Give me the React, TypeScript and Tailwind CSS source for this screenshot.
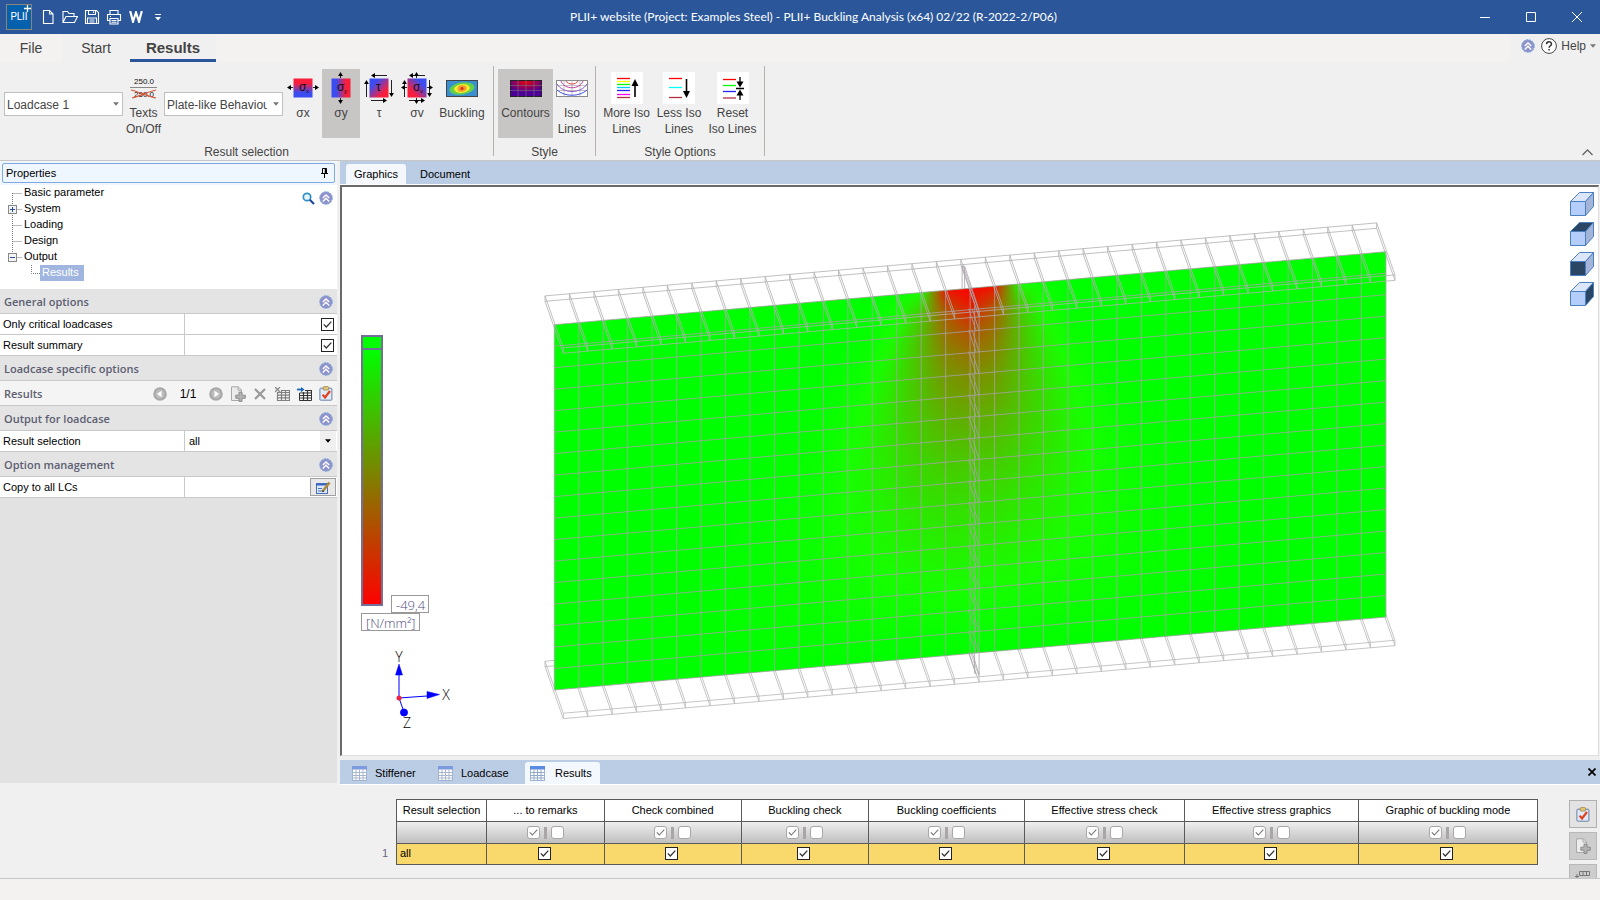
import React, { useState } from "react";
import clsx from "clsx";

const UI_FONT = "font-['Liberation_Sans',sans-serif]";
const HEAD_FONT = "font-['Open_Sans',sans-serif]";

/* ---------- small shared icons ---------- */

const CircleChevrons = () => (
  <svg width="14" height="14" viewBox="0 0 14 14">
    <circle cx="7" cy="7" r="6.3" fill="#8f93cc" stroke="#79a6dd" strokeWidth="1" strokeDasharray="2 1" />
    <path d="M3.8 7 7 3.9 10.2 7M3.8 10.4 7 7.3l3.2 3.1" fill="none" stroke="#fff" strokeWidth="1.4" />
  </svg>
);

const DownArrow = ({ color = "#777", className = "" }: { color?: string; className?: string }) => (
  <svg width="6" height="4" viewBox="0 0 6 4" className={className}>
    <path d="M0 .3h6L3 3.8z" fill={color} />
  </svg>
);

const DocPlusIcon = () => (
  <svg width="16" height="16" viewBox="0 0 16 16">
    <path d="M1.5.8h6.8l3 3v10.7H1.5z" fill="#ececec" stroke="#a9a9a9" />
    <path d="M8 .8v3.4h3.3" fill="none" stroke="#a9a9a9" />
    <path d="M9 6.2h3v3h3.3v3H12v3.2H9v-3.2H5.8v-3H9z" fill="#b4b4b4" stroke="#858585" strokeWidth=".9" />
  </svg>
);

const ClipboardIcon = () => (
  <svg width="14" height="15" viewBox="0 0 14 15">
    <rect x=".9" y="2.2" width="12" height="12" rx=".8" fill="#dfe9f8" stroke="#6b80a8" />
    <rect x="4.2" y=".6" width="5.4" height="3.4" rx="1" fill="#e3c878" stroke="#9a8248" strokeWidth=".8" />
    <path d="M3.6 8.6 6 11.4 11 5" fill="none" stroke="#e0401c" strokeWidth="2.2" />
  </svg>
);

const GridIcon = ({ faded = false }: { faded?: boolean }) => (
  <svg width="15" height="15" viewBox="0 0 15 15">
    <rect x=".5" y=".5" width="14" height="14" fill="#fff" stroke="#9fb3d4" />
    <rect width="15" height="3.5" fill={faded ? "#7d9ade" : "#5b8be0"} />
    <path
      d="M.5 6.5h14M.5 9.5h14M.5 12h14M4 3.5v11M7.5 3.5v11M11 3.5v11"
      stroke={faded ? "#a9b7cc" : "#90a9cd"}
      strokeWidth="1"
    />
  </svg>
);

interface CheckProps {
  label: string;
  soft?: boolean;
  checked?: boolean;
}

const Check: React.FC<CheckProps> = ({ label, soft = false, checked = true }) => {
  const [on, setOn] = useState(checked);

  return (
    <span className="relative block h-[13px] w-[13px]">
      <input
        type="checkbox"
        aria-label={label}
        checked={on}
        onChange={() => setOn(!on)}
        className={clsx(
          "block h-[13px] w-[13px] appearance-none bg-white",
          soft ? "rounded-[3px] border border-[#aaa6a8]" : "border border-[#222]"
        )}
      />
      {on && (
        <svg viewBox="0 0 13 13" className="pointer-events-none absolute inset-0 h-[13px] w-[13px]">
          <path
            d="M2.8 6.4 5.3 9 10.3 3.6"
            fill="none"
            stroke={soft ? "#777" : "#333"}
            strokeWidth={soft ? 1.1 : 1.3}
          />
        </svg>
      )}
    </span>
  );
};

/* ---------- title bar ---------- */

const quickActions = [
  {
    name: "New",
    icon: <path d="M3.5 1.5h6l3.5 3.5v9.5h-9.5zM9.5 1.5v3.5h3.5" />,
  },
  {
    name: "Open",
    icon: <path d="M1 13.5v-11h4.5l1.5 2h5v3M1 13.5 4 7.5h11.5l-3 6z" />,
  },
  {
    name: "Save",
    icon: <path d="M1.5 1.5h11l2 2v11h-13zM4.5 1.5v4h7v-4M9.5 2.5v1.5M3.5 14.5v-5.5h9v5.5M5.5 11h5M5.5 13h5" />,
  },
  {
    name: "Print",
    icon: <path d="M4 5.5v-4h8v4M3.5 11.5h-2v-6h13v6h-2M4 9.5h8v5.5h-8zM5.5 11.5h5M5.5 13.3h5M4 7.5h1" />,
  },
];

const TitleBar = () => (
  <header className="flex h-[34px] shrink-0 items-center bg-[#2b579a] text-white">
    <div className="relative ml-1.5 mr-[5px] flex h-[26px] w-[26px] items-center justify-center border border-[#8a8577] bg-[#0560ad] font-['Roboto',sans-serif] text-[10px] leading-none">
      PLII
      <svg viewBox="0 0 7 7" className="absolute right-0 top-0 h-[7px] w-[7px]">
        <path d="M3.5 0v7M0 3.5h7" stroke="#fff" strokeWidth="1.3" />
      </svg>
    </div>
    {quickActions.map((a) => (
      <button key={a.name} aria-label={a.name} className="flex w-[22px] justify-center">
        <svg width="16" height="16" viewBox="0 0 16 16" fill="none" stroke="#fff" strokeWidth="1.1">
          {a.icon}
        </svg>
      </button>
    ))}
    <button aria-label="Word export" className="flex w-[22px] justify-center">
      <svg width="14" height="12" viewBox="0 0 14 12" fill="none" stroke="#fff" strokeWidth="2.2">
        <path d="M1.2 0 4 10.5 7 1.5 10 10.5 12.8 0" />
      </svg>
    </button>
    <button aria-label="Customize" className="flex w-[22px] justify-center">
      <svg width="6" height="7" viewBox="0 0 6 7">
        <path d="M0 .5h6" stroke="#fff" />
        <path d="M0 3h6L3 6.5z" fill="#fff" />
      </svg>
    </button>
    <h1 className="flex-1 truncate pr-1 text-center font-['Lato',sans-serif] text-[12px] leading-4">
      PLII+ website (Project: Examples Steel) - PLII+ Buckling Analysis (x64) 02/22 (R-2022-2/P06)
    </h1>
    {[
      ["Minimize", "M0 5.5h10"],
      ["Maximize", "M.5.5h9v9h-9z"],
      ["Close", "M0 0l10 10M10 0 0 10"],
    ].map(([name, d]) => (
      <button key={name} aria-label={name} className="flex w-[46px] justify-center">
        <svg width="10" height="10" viewBox="0 0 10 10">
          <path d={d} fill="none" stroke="#fff" />
        </svg>
      </button>
    ))}
  </header>
);

/* ---------- ribbon ---------- */

const Arrow = ({ x1, y1, x2, y2 }: { x1: number; y1: number; x2: number; y2: number }) => {
  const len = Math.hypot(x2 - x1, y2 - y1);
  const ux = (x2 - x1) / len;
  const uy = (y2 - y1) / len;
  const bx = x2 - ux * 4;
  const by = y2 - uy * 4;
  return (
    <g>
      <path d={`M${x1} ${y1}L${bx} ${by}`} stroke="#222" />
      <path d={`M${x2} ${y2}L${bx - uy * 2.4} ${by + ux * 2.4}L${bx + uy * 2.4} ${by - ux * 2.4}z`} fill="#000" />
    </g>
  );
};

interface StressIconProps {
  id: string;
  dir: [number, number, number, number];
  colors: [string, string];
  sign: string;
  sub?: string;
  children: React.ReactNode;
}

const StressIcon: React.FC<StressIconProps> = ({ id, dir, colors, sign, sub, children }) => (
  <svg width="32" height="32" viewBox="0 0 32 32">
    <defs>
      <linearGradient id={id} x1={dir[0]} y1={dir[1]} x2={dir[2]} y2={dir[3]}>
        <stop offset=".25" stopColor={colors[0]} />
        <stop offset=".75" stopColor={colors[1]} />
      </linearGradient>
    </defs>
    {children}
    <rect x="6.5" y="6.5" width="19" height="19" fill={`url(#${id})`} />
    <text x={sub ? 12 : 13} y="19" fontSize="12" fontFamily="Liberation Sans" fill="#111">
      {sign}
    </text>
    {sub && (
      <text x="19" y="21" fontSize="6" fontFamily="Liberation Sans" fill="#111">
        {sub}
      </text>
    )}
  </svg>
);

const BLUE = "#3b4cf0";
const RED = "#f81e3c";

const SigmaX = () => (
  <StressIcon id="gsx" dir={[0, 0, 0, 1]} colors={[RED, BLUE]} sign="σ" sub="x">
    <Arrow x1={6} y1={15.5} x2={0} y2={15.5} />
    <Arrow x1={26} y1={15.5} x2={32} y2={15.5} />
  </StressIcon>
);

const SigmaY = () => (
  <StressIcon id="gsy" dir={[0, 0, 1, 0]} colors={[BLUE, RED]} sign="σ" sub="y">
    <Arrow x1={15.5} y1={6} x2={15.5} y2={0} />
    <Arrow x1={15.5} y1={26} x2={15.5} y2={32} />
  </StressIcon>
);

// shear arrows run round the square
const ShearArrows = () => (
  <>
    <Arrow x1={24} y1={3.5} x2={8} y2={3.5} />
    <Arrow x1={8} y1={28.5} x2={24} y2={28.5} />
    <Arrow x1={3.5} y1={25} x2={3.5} y2={8} />
    <Arrow x1={28.5} y1={8} x2={28.5} y2={25} />
  </>
);

const Tau = () => (
  <StressIcon id="gtau" dir={[0, 0, 1, 1]} colors={[BLUE, RED]} sign="τ">
    <ShearArrows />
  </StressIcon>
);

const SigmaV = () => (
  <StressIcon id="gsv" dir={[1, 0, 0, 1]} colors={[BLUE, RED]} sign="σ" sub="v">
    <ShearArrows />
    <Arrow x1={15.5} y1={6} x2={15.5} y2={0} />
    <Arrow x1={15.5} y1={26} x2={15.5} y2={32} />
    <Arrow x1={6} y1={15.5} x2={0} y2={15.5} />
    <Arrow x1={26} y1={15.5} x2={32} y2={15.5} />
  </StressIcon>
);

const BucklingIcon = () => (
  <svg width="32" height="17" viewBox="0 0 32 17">
    <rect x=".5" y=".5" width="31" height="16" fill="#3a8fd0" stroke="#444" />
    <g transform="rotate(-8 16 8.5)">
      <ellipse cx="16" cy="8.5" rx="12.5" ry="6" fill="#63cf4a" />
      <ellipse cx="16" cy="8.5" rx="8" ry="4.3" fill="#f6ea2c" />
      <ellipse cx="16" cy="8.5" rx="4.5" ry="3.2" fill="#f29a2e" />
      <circle cx="16" cy="8.5" r="1.6" fill="#d8301c" />
    </g>
  </svg>
);

const ContoursIcon = () => (
  <svg width="32" height="17" viewBox="0 0 32 17">
    <defs>
      <radialGradient id="gcon" cx=".5" cy=".1" r=".65">
        <stop offset="0" stopColor="#e60010" />
        <stop offset="1" stopColor="#4c0098" />
      </radialGradient>
    </defs>
    <rect x=".5" y=".5" width="31" height="16" fill="url(#gcon)" stroke="#222" />
    <path d="M0 5.5h32M0 10.5h32M8 0v17M16 0v17M24 0v17" stroke="#777" strokeOpacity=".7" strokeWidth=".8" />
  </svg>
);

const IsoIcon = () => (
  <svg width="32" height="17" viewBox="0 0 32 17" fill="none">
    <rect x=".5" y=".5" width="31" height="16" fill="#fff" stroke="#888" />
    <path d="M0 5.5h32M0 10.5h32M8 0v17M16 0v17M24 0v17" stroke="#aaa" strokeWidth=".7" />
    <path d="M10 1c2 4 10 4 12 0" stroke="#e04040" />
    <path d="M5 1c3 9 19 9 22 0" stroke="#c040a0" />
    <path d="M1 4c6 10 24 10 30 0" stroke="#8850c8" />
    <path d="M1 10c8 7 22 7 30 0" stroke="#4050e0" />
  </svg>
);

interface IsoBarsProps {
  bars: [number, string][];
  children: React.ReactNode;
}

const IsoBars: React.FC<IsoBarsProps> = ({ bars, children }) => (
  <svg width="32" height="32" viewBox="0 0 32 32">
    <rect width="32" height="32" fill="#fff" />
    {bars.map(([y, color]) => (
      <path key={y} d={`M6 ${y}h13`} stroke={color} strokeWidth="1.3" />
    ))}
    {children}
  </svg>
);

const MoreIsoIcon = () => (
  <IsoBars
    bars={[
      [6.5, "#f00"],
      [9.5, "#ff0"],
      [12.5, "#0f0"],
      [15.5, "#0cf"],
      [18.5, "#22f"],
      [22.5, "#f0f"],
      [25.5, "#b03040"],
    ]}>
    <path d="M24 25v-14" stroke="#000" strokeWidth="1.6" />
    <path d="M24 7l3.5 7h-7z" fill="#000" />
  </IsoBars>
);

const LessIsoIcon = () => (
  <IsoBars
    bars={[
      [6.5, "#f00"],
      [15.5, "#0ff"],
      [25.5, "#b03040"],
    ]}>
    <path d="M23.5 7v14" stroke="#000" strokeWidth="1.6" />
    <path d="M23.5 26l3.5-7h-7z" fill="#000" />
  </IsoBars>
);

const ResetIsoIcon = () => (
  <IsoBars
    bars={[
      [7.5, "#f00"],
      [13.5, "#0f0"],
      [19.5, "#22f"],
      [26, "#b03040"],
    ]}>
    <path d="M23 5v8M23 20v8M19 16.5h8" stroke="#000" strokeWidth="1.3" />
    <path d="M23 15.5l3.5-6h-7zM23 17.5l3.5 6h-7z" fill="#000" />
  </IsoBars>
);

const TextsIcon = () => (
  <svg width="28" height="24" viewBox="0 0 28 24" fontFamily="Liberation Sans" fontSize="8">
    <text x="4" y="8" fill="#111">
      250.0
    </text>
    <path d="M0 11.5h27" stroke="#888" />
    <text x="4" y="21" fill="#111">
      250.0
    </text>
    <path d="M1 14c8 2 16 6 25 8M26 14c-9 2-16 6-24 8" fill="none" stroke="#d8583a" strokeWidth="1.2" />
  </svg>
);

interface RibbonButtonProps {
  icon: React.ReactNode;
  lines: string[];
  width: string;
  active?: boolean;
  onClick?: () => void;
}

const RibbonButton: React.FC<RibbonButtonProps> = ({ icon, lines, width, active, onClick }) => (
  <button
    onClick={onClick}
    className={clsx("flex h-[69px] shrink-0 flex-col items-center whitespace-nowrap", width, active && "bg-[#c8c6c4]")}>
    <span className="flex h-9 items-center justify-center pt-0.5">{icon}</span>
    {lines.map((l) => (
      <span key={l} className="leading-4">
        {l}
      </span>
    ))}
  </button>
);

const RibbonSelect = ({ label, value }: { label: string; value: string }) => (
  <div className="relative mt-[23px] h-6 w-[119px] shrink-0">
    <select
      aria-label={label}
      className="h-full w-full appearance-none overflow-hidden border border-[#c0c0c0] bg-white pl-0.5 pr-[15px] pt-0.5 text-[12px] text-[#444]">
      <option>{value}</option>
    </select>
    <DownArrow className="pointer-events-none absolute right-[4px] top-[10px]" />
  </div>
);

const RibbonGroup = ({ title, children }: { title: string; children: React.ReactNode }) => (
  <section className="mt-1 flex h-[90px] shrink-0 flex-col border-r border-[#b4b2b0] pt-[3px]">
    <div className="flex px-1">{children}</div>
    <h2 className="mt-1.5 text-center leading-4">{title}</h2>
  </section>
);

const Ribbon = () => {
  const [result, setResult] = useState("σy");
  const [style, setStyle] = useState("Contours");

  const stresses: [string, React.ReactNode, string][] = [
    ["σx", <SigmaX />, "w-[38px]"],
    ["σy", <SigmaY />, "w-[38px]"],
    ["τ", <Tau />, "w-[38px]"],
    ["σv", <SigmaV />, "w-[38px]"],
    ["Buckling", <BucklingIcon />, "w-[52px]"],
  ];

  return (
    <div className="shrink-0 border-b border-[#c8c6c4] bg-[#f0f0f0] text-[12px] text-[#444]">
      <nav className="flex h-7 bg-[#f3f2f1] text-[14px]">
        <button className="w-[62px]">File</button>
        <button className="w-[68px] bg-[#f0f0f0]">Start</button>
        <button className="w-[86px] border-b-[3px] border-[#2b579a] bg-[#f0f0f0] pt-[3px] text-[15px] font-bold leading-5">
          Results
        </button>
        <div className="ml-auto flex items-center bg-[#f0f0f0] pb-1 pr-1 pl-3 text-[12px]">
          <button aria-label="Collapse all" className="mr-1.5">
            <CircleChevrons />
          </button>
          <button className="flex items-center gap-1">
            <svg width="16" height="16" viewBox="0 0 16 16">
              <circle cx="8" cy="8" r="7.4" fill="#fff" stroke="#444" />
              <path
                d="M5.6 6.2c0-3.2 4.9-3 4.9-.2 0 1.700-2.400 1.800-2.400 3.800M8.1 11v1.6"
                fill="none"
                stroke="#333"
                strokeWidth="1.5"
              />
            </svg>
            Help
            <DownArrow />
          </button>
        </div>
      </nav>
      <div className="flex h-[98px]">
        <RibbonGroup title="Result selection">
          <RibbonSelect label="Loadcase" value="Loadcase 1" />
          <RibbonButton icon={<TextsIcon />} lines={["Texts", "On/Off"]} width="w-[41px]" />
          <RibbonSelect label="Behaviour" value="Plate-like Behaviour" />
          <div className="flex px-px">
            {stresses.map(([name, icon, width]) => (
              <RibbonButton
                key={name}
                icon={icon}
                lines={[name]}
                width={width}
                active={result === name}
                onClick={() => setResult(name)}
              />
            ))}
          </div>
        </RibbonGroup>
        <RibbonGroup title="Style">
          <RibbonButton
            icon={<ContoursIcon />}
            lines={["Contours"]}
            width="w-[55px]"
            active={style === "Contours"}
            onClick={() => setStyle("Contours")}
          />
          <RibbonButton
            icon={<IsoIcon />}
            lines={["Iso", "Lines"]}
            width="w-[38px]"
            active={style === "Iso"}
            onClick={() => setStyle("Iso")}
          />
        </RibbonGroup>
        <RibbonGroup title="Style Options">
          <RibbonButton icon={<MoreIsoIcon />} lines={["More Iso", "Lines"]} width="w-[53px]" />
          <RibbonButton icon={<LessIsoIcon />} lines={["Less Iso", "Lines"]} width="w-[52px]" />
          <RibbonButton icon={<ResetIsoIcon />} lines={["Reset", "Iso Lines"]} width="w-[55px]" />
        </RibbonGroup>
        <button aria-label="Collapse ribbon" className="ml-auto mr-[7px] self-end pb-1">
          <svg width="11" height="7" viewBox="0 0 11 7">
            <path d="M.5 6 5.5 1l5 5" fill="none" stroke="#666" strokeWidth="1.3" />
          </svg>
        </button>
      </div>
    </div>
  );
};

/* ---------- properties panel ---------- */

interface TreeItem {
  name: string;
  box?: "+" | "-";
  child?: boolean;
}

const treeItems: TreeItem[] = [
  { name: "Basic parameter" },
  { name: "System", box: "+" },
  { name: "Loading" },
  { name: "Design" },
  { name: "Output", box: "-" },
  { name: "Results", child: true },
];

const TreeGutter = ({ item, first }: { item: TreeItem; first: boolean }) => {
  if (item.child) {
    return (
      <svg width="40" height="16" viewBox="0 0 40 16">
        <path d="M31.5 0v8.5H40" fill="none" stroke="#777" strokeDasharray="1 1" />
      </svg>
    );
  }
  return (
    <svg width="22" height="16" viewBox="0 0 22 16">
      <path
        d={`M12.5 ${first ? 8 : 0}V${item.box === "-" ? 8 : 16}M12.5 8.5H22`}
        stroke="#777"
        strokeDasharray="1 1"
      />
      {item.box && (
        <>
          <rect x="8.5" y="4.5" width="8" height="8" fill="#f4f4f4" stroke="#888" />
          <path d={item.box === "+" ? "M10 8.5h5M12.5 6v5" : "M10 8.5h5"} stroke="#2a4a9c" />
        </>
      )}
    </svg>
  );
};

const SectionHead = ({ title, children }: { title: string; children?: React.ReactNode }) => (
  <div
    className={clsx("flex h-[25px] items-center border-b border-[#c9c9c9]", children ? "bg-[#f4f4f4]" : "bg-[#e4e4e4]")}>
    <h3 className={clsx("flex-1 pl-1 pt-0.5 text-[11px] font-semibold text-[#5c5e72]", HEAD_FONT)}>{title}</h3>
    {children ?? (
      <button aria-label={`Collapse ${title}`} className="w-[18px] pt-px">
        <CircleChevrons />
      </button>
    )}
  </div>
);

const PropertyRow = ({ label, children }: { label: string; children?: React.ReactNode }) => (
  <div className="flex h-[21px] border-b border-[#c9c9c9] bg-white">
    <div className="flex w-[185px] items-center border-r border-[#c9c9c9] pl-[3px]">{label}</div>
    <div className="flex flex-1 items-center justify-end">{children}</div>
  </div>
);

const StepIcon = ({ d }: { d: string }) => (
  <svg width="14" height="14" viewBox="0 0 14 14">
    <circle cx="7" cy="7" r="6.8" fill="#a9a9a9" />
    <circle cx="7" cy="7" r="4.5" fill="#bdbdbd" />
    <path d={d} fill="#fff" />
  </svg>
);

const resultTools: [string, React.ReactNode][] = [
  ["Next", <StepIcon d="M5.5 3.8 10 7l-4.5 3.2z" />],
  ["Add", <DocPlusIcon />],
  [
    "Delete",
    <svg width="12" height="12" viewBox="0 0 12 12">
      <path d="M1 1l10 10M11 1 1 11" stroke="#999" strokeWidth="2.2" />
    </svg>,
  ],
  [
    "Clear table",
    <svg width="15" height="14" viewBox="0 0 15 14">
      <path
        d="M2.5 5.5h12v8h-12zM2.5 8.2h12M2.5 10.8h12M6.5 3v10.5M10.5 3v10.5M7 3.5h7.5v2"
        fill="none"
        stroke="#808080"
        strokeWidth="1.2"
      />
      <path d="M0 0l5 5M5 0 0 5" stroke="#8a8a8a" strokeWidth="1.3" />
    </svg>,
  ],
  [
    "Insert table",
    <svg width="15" height="14" viewBox="0 0 15 14">
      <path d="M2.5 6h12v7.5h-12z" fill="#fff" stroke="#333" />
      <path d="M2.5 8.5h12M2.5 11h12M6.5 5v8.5M10.5 3v10.5M8 3.5h6.5v2.5" fill="none" stroke="#333" strokeWidth="1.2" />
      <path d="M0 2.5h5" stroke="#1768b8" strokeWidth="1.8" />
      <path d="M4 0l3.5 2.5L4 5.2z" fill="#1768b8" />
    </svg>,
  ],
  ["Check", <ClipboardIcon />],
];

const PropertiesPanel = () => (
  <aside className="flex w-[337px] shrink-0 flex-col text-[11px] text-black">
    <div className="flex-1 bg-[#e2e2e2]">
      <div className="bg-[#f0f6fe] p-0.5">
        <div className="flex h-5 items-center justify-between rounded-[2px] border border-[#7fa9df] bg-[#eef6ff] pl-[3px] pr-[5px]">
          <h2>Properties</h2>
          <button aria-label="Pin panel">
            <svg width="9" height="10" viewBox="0 0 9 10">
              <path d="M2.5 5.5v-5h4v5M1 5.5h7M4.5 5.5V10" fill="none" stroke="#000" />
              <path d="M5.5 0v5.5" stroke="#000" strokeWidth="1.5" />
            </svg>
          </button>
        </div>
      </div>
      <div className="flex h-[104px] items-start bg-white">
        <ul className="flex-1">
          {treeItems.map((item, i) => (
            <li key={item.name} className="flex h-4 items-center">
              <TreeGutter item={item} first={i === 0} />
              {item.child ? (
                <a href="#results" className="h-4 bg-[#a0b6e0] pl-0.5 pr-[5px] leading-[14px] text-white">
                  {item.name}
                </a>
              ) : (
                <a href="#node" className="pb-0.5 pl-0.5 leading-[14px]">
                  {item.name}
                </a>
              )}
            </li>
          ))}
        </ul>
        <div className="flex items-center gap-1 pr-1 pt-1.5">
          <button aria-label="Search">
            <svg width="13" height="13" viewBox="0 0 13 13">
              <circle cx="5" cy="5" r="3.7" fill="#e4f4fb" stroke="#2f8fc4" strokeWidth="1.7" />
              <path d="M7.8 7.8 12 12" stroke="#24489a" strokeWidth="2.2" />
            </svg>
          </button>
          <button aria-label="Collapse tree">
            <CircleChevrons />
          </button>
        </div>
      </div>

      <SectionHead title="General options" />
      <PropertyRow label="Only critical loadcases">
        <span className="w-4">
          <Check label="Only critical loadcases" />
        </span>
      </PropertyRow>
      <PropertyRow label="Result summary">
        <span className="w-4">
          <Check label="Result summary" />
        </span>
      </PropertyRow>
      <SectionHead title="Loadcase specific options" />
      <SectionHead title="Results">
        <div className="flex items-center pt-px">
          <button aria-label="Previous" className="flex w-[22px] justify-center">
            <StepIcon d="M8.5 3.8 4 7l4.5 3.2z" />
          </button>
          <span className="w-[34px] text-center text-[12px]">1/1</span>
          {resultTools.map(([name, icon]) => (
            <button key={name} aria-label={name} className="flex w-[22px] justify-center">
              {icon}
            </button>
          ))}
        </div>
      </SectionHead>
      <SectionHead title="Output for loadcase" />
      <PropertyRow label="Result selection">
        <div className="relative h-full w-full">
          <select aria-label="Result selection" className="h-full w-full appearance-none bg-white pl-1">
            <option>all</option>
          </select>
          <span className="pointer-events-none absolute inset-y-0 right-px flex w-4 items-center justify-center bg-[#f0f0f0]">
            <DownArrow color="#000" />
          </span>
        </div>
      </PropertyRow>
      <SectionHead title="Option management" />
      <PropertyRow label="Copy to all LCs">
        <button
          aria-label="Copy to all LCs"
          className="mr-px flex h-[18px] w-[26px] items-center justify-center border border-[#a0a0a0] bg-[#e8e8e8]">
          <svg width="15" height="13" viewBox="0 0 15 13">
            <rect x=".5" y="2.5" width="11" height="10" fill="#dce8fa" stroke="#4a70b8" />
            <path d="M0 3.5h12" stroke="#3c64c0" strokeWidth="2" />
            <path d="M2 7.5h4M2 10h4" stroke="#4a70b8" />
            <path d="M6.5 10.5 13.5 1.5" stroke="#b08a3c" strokeWidth="2.6" />
            <path d="M6 11.2l.8-2 1.5 1z" fill="#222" />
          </svg>
        </button>
      </PropertyRow>
    </div>
    <div className="h-[95px] bg-[#f0f0f0]" />
  </aside>
);

/* ---------- 3D model ---------- */

const COLS = 34;
const ROWS = 17;
const X0 = 554.3;
const Y0 = 324.7;
const DX = 24.46;
const DY = 21.49;
const SLOPE = -73 / 831.7;

const webX = (c: number) => X0 + c * DX;
const webY = (c: number, r: number) => Y0 + r * DY + c * DX * SLOPE;

const topRow: Record<number, number> = { 14: 0.03, 15: 0.1, 16: 0.92, 17: 1, 18: 0.92, 19: 0.12, 20: 0.03 };
const centre = [1, 0.9, 0.72, 0.6, 0.51, 0.45, 0.39, 0.34, 0.29, 0.25, 0.21, 0.18, 0.15, 0.12, 0.09, 0.06, 0.03, 0];

// relative stress at a mesh node
const stressAt = (c: number, r: number) => {
  if (r === 0) return topRow[c] ?? 0;
  const w = 1.5 + 0.38 * r;
  return centre[r] * Math.exp(-Math.pow((c - 17) / w, 2));
};

const stressColor = (s: number) =>
  `rgb(${Math.round(255 * s)},${Math.round(Math.min(255, 255 * 1.1 * (1 - s)))},0)`;

// the loaded part of the web is drawn as narrow strips, each with its own vertical gradient
const STRIPS_PER_COL = 12;
const strips = Array.from({ length: 26 * STRIPS_PER_COL }, (_, i) => {
  const pos = 4 + (i + 0.5) / STRIPS_PER_COL;
  const c = Math.floor(pos);
  const f = pos - c;
  return {
    pos,
    stops: centre.map((_, r) => stressColor(stressAt(c, r) * (1 - f) + stressAt(c + 1, r) * f)),
  };
});

const flangePath = (row: number) => {
  const parts: string[] = [];
  const at = (c: number, dx: number, dy: number) => `${webX(c) + dx} ${webY(c, row) + dy}`;
  for (const [dx, dy] of [
    [-9.3, -28.8],
    [-9.3, -23.4],
    [9, 23.2],
    [9, 28.6],
  ]) {
    parts.push(`M${at(0, dx, dy)}L${at(COLS, dx, dy)}`);
  }
  for (let c = 0; c <= COLS; c++) {
    parts.push(`M${at(c, -9.3, -28.8)}L${at(c, 9, 23.2)}V${webY(c, row) + 28.6}`);
    parts.push(`M${at(c, -9.3, -28.8)}L${at(c, -9.3, -23.4)}L${at(c, 9, 28.6)}`);
  }
  return parts.join("");
};

const meshPath = () => {
  const parts: string[] = [];
  for (let c = 0; c <= COLS; c++) {
    parts.push(`M${webX(c)} ${webY(c, 0)}V${webY(c, ROWS)}`);
  }
  for (let r = 0; r <= ROWS; r++) {
    parts.push(`M${webX(0)} ${webY(0, r)}L${webX(COLS)} ${webY(COLS, r)}`);
  }
  return parts.join("");
};

const stiffenerPath = () => {
  const x = webX(17);
  const parts: string[] = [];
  const top = webY(17, 0);
  const bottom = webY(17, ROWS);
  parts.push(`M${x - 8} ${top - 22}V${top}M${x - 5.5} ${top - 21}V${top}M${x - 8} ${top - 22}L${x + 6} ${top + 20}`);
  parts.push(`M${x - 8} ${top - 22}h2.5L${x + 9} ${top + 22}`);
  parts.push(`M${x + 4.5} ${top + 18}V${bottom + 20}M${x + 9} ${top + 22}V${bottom + 22}`);
  for (let r = 1; r <= ROWS; r++) {
    const y = webY(17, r);
    parts.push(`M${x - 1.5} ${y - 1}L${x + 6} ${y + 21}M${x + 2} ${y - 1}L${x + 9} ${y + 21}`);
  }
  return parts.join("");
};

const ModelView = () => (
  <svg viewBox="343 187 1254 568" className="block h-full w-full">
    <defs>
      {strips.map((s, i) => (
        <linearGradient key={i} id={`strip${i}`} x1="0" y1="0" x2="0" y2="1">
          {s.stops.map((color, r) => (
            <stop key={r} offset={r / ROWS} stopColor={color} />
          ))}
        </linearGradient>
      ))}
      <linearGradient id="legend" x1="0" y1="0" x2="0" y2="1">
        <stop offset="0.05" stopColor="#00ff00" />
        <stop offset="1" stopColor="#ff0000" />
      </linearGradient>
      <clipPath id="web">
        <path
          d={`M${webX(0)} ${webY(0, 0)}L${webX(COLS)} ${webY(COLS, 0)}V${webY(COLS, ROWS)}L${webX(0)} ${webY(0, ROWS)}z`}
        />
      </clipPath>
    </defs>

    <path d={flangePath(ROWS)} fill="none" stroke="#b8b8b8" strokeWidth=".8" />
    <g clipPath="url(#web)">
      <rect x="550" y="240" width="840" height="460" fill="#00ff00" />
      {strips.map((s, i) => {
        const x = webX(s.pos - 0.5 / STRIPS_PER_COL);
        const y = webY(s.pos, 0);
        return <rect key={i} x={x} y={y} width={DX / STRIPS_PER_COL + 0.6} height={ROWS * DY} fill={`url(#strip${i})`} />;
      })}
    </g>
    <path d={meshPath()} fill="none" stroke="#a8a0a8" strokeOpacity=".8" />
    <path d={flangePath(0)} fill="none" stroke="#b0b0b0" strokeWidth=".8" />
    <path d={stiffenerPath()} fill="none" stroke="#a8a0a8" strokeWidth=".8" />

    {/* colour legend */}
    <rect x="362" y="336" width="20" height="269" fill="url(#legend)" stroke="#736f9b" strokeWidth="2" />
    <path d="M362 349h20" stroke="#736f9b" strokeWidth="2" />
    <g fill="none" stroke="#999">
      <rect x="391.5" y="595.5" width="37" height="17" />
      <rect x="361.5" y="613.5" width="58" height="17" />
    </g>
    <g fontFamily="Open Sans" fontSize="13" fontWeight="300" fill="#4f4b80">
      <text x="396" y="610">
        -49,4
      </text>
      <text x="366" y="628">
        [N/mm²]
      </text>
    </g>

    {/* axes */}
    <g stroke="#0000ff" fill="#0000ff">
      <path d="M399 698v-26M399 698l28-2M399 698l5 14" />
      <path d="M399 664l-3.5 11h7zM439.5 694.5l-12.5-3v7z" strokeWidth=".5" />
      <circle cx="404" cy="712.5" r="3.5" />
    </g>
    <circle cx="399" cy="698" r="2.5" fill="#f02040" />
    <g fontFamily="Open Sans" fontSize="14" fontWeight="300" fill="#000" textAnchor="middle">
      <text x="399" y="662">
        Y
      </text>
      <text x="446" y="700">
        X
      </text>
      <text x="407" y="728">
        Z
      </text>
    </g>
  </svg>
);

const views = [
  { name: "3D view", top: "#dce6fa", front: "#b4cdfa", side: "#a3b4d8" },
  { name: "Top view", top: "#2b4565", front: "#b4cdfa", side: "#a3b4d8" },
  { name: "Front view", top: "#dce6fa", front: "#2b4565", side: "#a3b4d8" },
  { name: "Side view", top: "#dce6fa", front: "#b4cdfa", side: "#2b4565" },
];

const GraphicsPanel = () => (
  <>
    <nav className="flex h-6 shrink-0 items-end border-b border-white bg-[#bbcde5] pl-1.5">
      <button className="h-5 rounded-t-[3px] bg-[#f4f8fd] px-2">Graphics</button>
      <button className="ml-1.5 h-5 px-2">Document</button>
    </nav>
    <div className="relative mr-px min-h-0 flex-1 border-2 border-b border-r border-[#6a6a6a] border-b-[#e0dede] border-r-[#e0dede] bg-white">
      <ModelView />
      <div className="absolute right-1 top-[5px] flex flex-col gap-1.5">
        {views.map((v) => (
          <button key={v.name} aria-label={v.name}>
            <svg width="24" height="24" viewBox="0 0 24 24" className="block" stroke="#4a7fc0" strokeLinejoin="round">
              <path d="M.5 9.5 9.5.5h14l-8 9z" fill={v.top} />
              <path d="M15.5 9.5l8-9v14l-8 9z" fill={v.side} />
              <path d="M.5 9.5h15v14h-15z" fill={v.front} />
            </svg>
          </button>
        ))}
      </div>
    </div>
  </>
);

/* ---------- result table ---------- */

const columns = [
  { name: "Result selection", width: "w-[7.9%]" },
  { name: "... to remarks", width: "w-[10.3%]" },
  { name: "Check combined", width: "w-[12%]" },
  { name: "Buckling check", width: "w-[11.2%]" },
  { name: "Buckling coefficients", width: "w-[13.6%]" },
  { name: "Effective stress check", width: "w-[14.1%]" },
  { name: "Effective stress graphics", width: "w-[15.2%]" },
  { name: "Graphic of buckling mode", width: "w-[15.7%]" },
];

const ResultTable = () => (
  <table className="h-[65px] flex-1 table-fixed border-collapse border border-[#5a5a5a]">
    <thead>
      <tr className="h-[22px] bg-white">
        {columns.map((c) => (
          <th key={c.name} className={clsx("whitespace-nowrap border border-[#5a5a5a] p-0 font-normal", c.width)}>
            {c.name}
          </th>
        ))}
      </tr>
    </thead>
    <tbody>
      <tr className="h-[22px] bg-linear-to-b from-[#efefef] to-[#bdbdbd]">
        {columns.map((c, i) => (
          <td key={c.name} className="border border-[#5a5a5a] p-0">
            {i > 0 && (
              <div className="flex items-center justify-center gap-1">
                <Check soft label={`Select all: ${c.name}`} />
                <span className="h-3 w-[3px] bg-[#aaa6a8]" />
                <Check soft checked={false} label={`Clear all: ${c.name}`} />
              </div>
            )}
          </td>
        ))}
      </tr>
      <tr className="h-[21px] bg-[#fad96c]">
        {columns.map((c, i) => (
          <td key={c.name} className="border border-[#5a5a5a] p-0 pb-0.5">
            {i === 0 ? (
              <span className="pl-[3px]">all</span>
            ) : (
              <div className="flex justify-center pr-0.5">
                <Check label={c.name} />
              </div>
            )}
          </td>
        ))}
      </tr>
    </tbody>
  </table>
);

const TablePanel = () => (
  <div className="mt-1 h-[118px] shrink-0 overflow-hidden bg-[#f0f0f0]">
    <nav className="flex h-[25px] items-end border-b border-white bg-[#bbcde5] pl-1">
      {[
        ["Stiffener", "w-[86px]"],
        ["Loadcase", "w-[95px]"],
        ["Results", "w-[75px]"],
      ].map(([name, width]) => (
        <button
          key={name}
          className={clsx(
            "flex h-[22px] items-center rounded-t-[3px]",
            width,
            name === "Results" ? "gap-2.5 bg-[#f3f8fe] pl-[5px]" : "gap-2 pl-2"
          )}>
          <GridIcon faded={name !== "Results"} />
          {name}
        </button>
      ))}
      <button aria-label="Close panel" className="mb-2 ml-auto mr-1">
        <svg width="8" height="8" viewBox="0 0 8 8">
          <path d="M.5.5l7 7M7.5.5l-7 7" stroke="#000" strokeWidth="1.7" />
        </svg>
      </button>
    </nav>
    <div className="flex items-start pr-[3px] pt-3.5">
      <span className="w-14 pr-2 pt-[46px] text-right text-[#6b6480]">1</span>
      <ResultTable />
      <div className="ml-[31px] mt-px flex w-7 flex-col gap-1">
        <button aria-label="Check results" className="flex h-7 items-center justify-center border border-[#b0b0b0] bg-[#e3e3e3]">
          <ClipboardIcon />
        </button>
        <button aria-label="Add result" className="flex h-7 items-center justify-center border border-[#b8b8b8] bg-[#cdcdcd]">
          <DocPlusIcon />
        </button>
        <button aria-label="Insert row" className="flex h-7 justify-center border border-[#b8b8b8] bg-[#cdcdcd] pt-1.5">
          <svg width="16" height="12" viewBox="0 0 16 12">
            <path d="M4.5.5h10v4h-10zM8 .5v4M11.5.5v4M0 5.5h4M2 3v5M6.5 7.5h8v4h-8z" fill="none" stroke="#777" />
          </svg>
        </button>
      </div>
    </div>
  </div>
);

const App: React.FC = () => (
  <div className={clsx("flex h-screen flex-col overflow-hidden bg-[#f0f0f0]", UI_FONT)}>
    <TitleBar />
    <Ribbon />
    <main className="flex min-h-0 flex-1">
      <PropertiesPanel />
      <div className="ml-[3px] flex min-w-0 flex-1 flex-col text-[11px] text-black">
        <GraphicsPanel />
        <TablePanel />
      </div>
    </main>
    <footer className="h-[22px] shrink-0 border-t border-[#c8c6c4] bg-[#f3f2f1]" />
  </div>
);

export default App;
